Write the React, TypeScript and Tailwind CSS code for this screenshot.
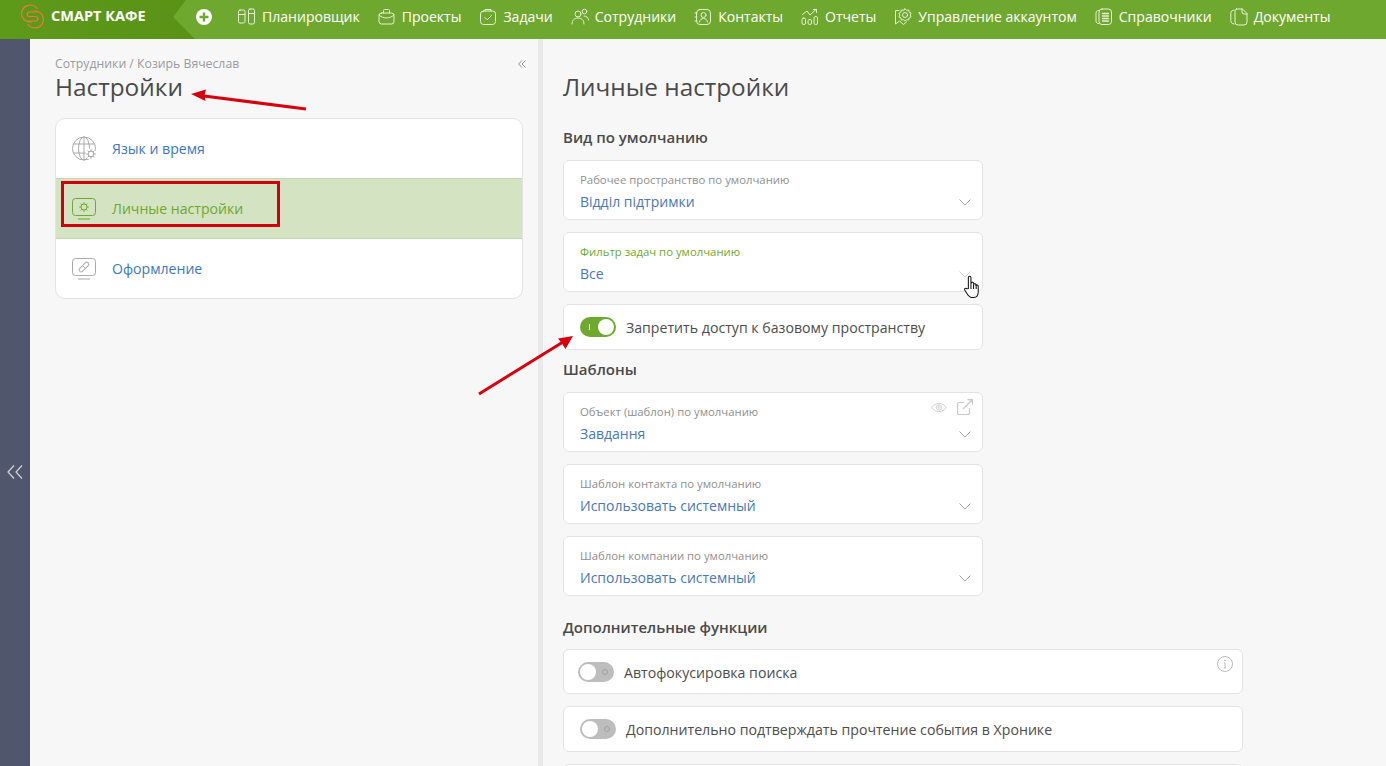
import React from "react";

const I = ({ children, cls = "w-[18px] h-[18px]", vb = "0 0 18 18" }: { children: React.ReactNode; cls?: string; vb?: string }) => (
  <svg viewBox={vb} className={cls} fill="none" stroke="currentColor" strokeWidth="1" strokeLinecap="round" strokeLinejoin="round">
    {children}
  </svg>
);

const navItems: { label: string; icon: React.ReactNode }[] = [
  { label: "Планировщик", icon: <I><rect x="0.500" y="2" width="6.500" height="13" rx="1.500" /><rect x="10.500" y="1" width="6" height="15" rx="1.500" /><path d="M.5 6.500H7M10.500 5.500h6" /></I> },
  { label: "Проекты", icon: <I><rect x="1" y="5" width="15" height="11" rx="2.500" /><path d="M1 7c4 4 11 4 15 0" /><path d="M5.500 5V2.500a1 1 0 0 1 1-1h4a1 1 0 0 1 1 1V5" /></I> },
  { label: "Задачи", icon: <I><rect x="1.500" y="3" width="15" height="13.500" rx="3" /><path d="M6 3V1.500h6V3M6 9.500l2.300 2.300L12.500 7.500" /></I> },
  { label: "Сотрудники", icon: <I><circle cx="7" cy="6" r="3" /><path d="M1 16c0-4 2.500-6 6-6s6 2 6 6" /><circle cx="13.500" cy="3.500" r="2.300" /><path d="M13 8c2.500 0 4.500 1.500 4.500 4" /></I> },
  { label: "Контакты", icon: <I><rect x="2.500" y="1.500" width="14" height="15" rx="3.500" /><circle cx="9.500" cy="7" r="2.500" /><path d="M5.500 14c.3-2.500 2-3.500 4-3.500s3.700 1 4 3.500M1 5h2M1 9h2M1 13h2" /></I> },
  { label: "Отчеты", icon: <I><rect x="1" y="10" width="3.500" height="6.500" rx="1.500" /><rect x="7" y="11.500" width="3.500" height="5" rx="1.500" /><rect x="13" y="8.500" width="3.500" height="8" rx="1.500" /><path d="M1.500 6.500L6 3l3 4 6-5.500M12.500 1.500h3v3" /></I> },
  { label: "Управление аккаунтом", icon: <I><path d="M5 2.500H1.500V16l4-3 4 3.500 3-2.500" /><path d="M11 .8l1.500 1.500 2.200-.3.400 2.100 2 1-1 1.900 1 1.900-2 1-.4 2.100-2.200-.3L11 13.200l-1.500-1.500-2.200.3-.4-2.100-2-1 1-1.900-1-1.900 2-1 .4-2.100 2.200.3z" /><circle cx="11" cy="7" r="2.500" /></I> },
  { label: "Справочники", icon: <I><path d="M3.500 2.500C2 2.500 1 3.500 1 5v8c0 1.500 1 2.500 2.500 2.500" /><rect x="4" y="1" width="12.500" height="15.500" rx="3" /><path d="M7.500 5.500h6M7.500 8h6M7.500 10.500h6M7.500 13h6" strokeWidth="1.300" /></I> },
  { label: "Документы", icon: <I><path d="M4 2C2 2 .8 3.500.8 5.500v7C.8 14.500 2 16 4 16" /><path d="M6.500 1h6l4.500 4.500V14a3 3 0 0 1-3 3H8a3 3 0 0 1-3-3V3a2 2 0 0 1 1.500-2z" /><path d="M12 1v3a2 2 0 0 0 2 2h3" /></I> },
];

const Chevron = ({ cls = "text-[#a9a9a9]" }: { cls?: string }) => (
  <svg viewBox="0 0 12 7" className={`w-3 h-[7px] ${cls}`} fill="none" stroke="currentColor" strokeWidth="1">
    <path d="M.5.5L6 6 11.500.5" />
  </svg>
);

const SelectCard = ({ label, value, active, actions }: { label: string; value: string; active?: boolean; actions?: boolean }) => (
  <div className="relative w-[420px] h-[60px] bg-white border border-[#e3e3e3] rounded-md pl-4 pr-[11px] pt-[12px]">
    <div className={`text-[11.350px] leading-[14px] ${active ? "text-[#6fa82e]" : "text-[#8f8f8f]"}`}>{label}</div>
    <div className="flex items-center justify-between mt-[3px] h-[24px]">
      <span className="text-[14px] pb-[2px] text-[#4a78b5]">{value}</span>
      <Chevron cls={active ? "text-[#cfcfcf]" : "text-[#a9a9a9]"} />
    </div>
    {actions && (
      <div className="absolute right-[9px] top-[6px] flex items-center gap-[10px] text-[#c9c9c9]">
        <svg viewBox="0 0 18 12" className="w-4 h-[11px]" fill="none" stroke="currentColor" strokeWidth="1">
          <path d="M1 6c3-6 13-6 16 0-3 6-13 6-16 0z" /><circle cx="9" cy="6" r="3" /><circle cx="9" cy="6" r="1" />
        </svg>
        <svg viewBox="0 0 16 16" className="w-4 h-4" fill="none" stroke="currentColor" strokeWidth="1.200">
          <path d="M12.500 9v5a1.500 1.500 0 0 1-1.500 1.500H2A1.500 1.500 0 0 1 .6 14V5A1.500 1.500 0 0 1 2 3.500h5M6 10L15.500.5M10.500.6h5v5" />
        </svg>
      </div>
    )}
  </div>
);

const Toggle = ({ on }: { on?: boolean }) =>
  on ? (
    <span className="relative shrink-0 flex items-center w-[36px] h-[20px] rounded-full bg-[#6fa82e]">
      <span className="ml-[9px] w-px h-[6px] bg-white" />
      <span className="absolute right-[2px] top-[2px] w-4 h-4 rounded-full bg-white" />
    </span>
  ) : (
    <span className="relative shrink-0 flex items-center w-[36px] h-[20px] rounded-full bg-[#bdbdbd]">
      <span className="absolute left-[2px] top-[2px] w-4 h-4 rounded-full bg-white" />
      <span className="absolute right-[6px] top-[7px] w-[6px] h-[6px] rounded-full border border-[#a3a3a3]" />
    </span>
  );

const MenuRow = ({ label, icon, active }: { label: string; icon: React.ReactNode; active?: boolean }) => (
  <div className={`flex items-center pl-[15px] ${active ? "h-[61px] bg-[#d4e3c2] border-y border-[#c5d6b1]" : "h-[59px]"}`}>
    <span className="w-[26px] h-[26px] flex items-center justify-center">{icon}</span>
    <span className={`ml-[15px] text-[14.100px] ${active ? "text-[#6fa82e]" : "text-[#3a78c2]"}`}>{label}</span>
  </div>
);

const Gear = ({ cx, cy, r = 2.5, len = 1.8 }: { cx: number; cy: number; r?: number; len?: number }) => (
  <g>
    <circle cx={cx} cy={cy} r={r} />
    <path
      d={[0, 45, 90, 135, 180, 225, 270, 315]
        .map((a) => {
          const c = Math.cos((a * Math.PI) / 180);
          const s = Math.sin((a * Math.PI) / 180);
          return `M${cx + r * c} ${cy + r * s}L${cx + (r + len) * c} ${cy + (r + len) * s}`;
        })
        .join("")}
    />
  </g>
);

export default function App() {
  return (
    <div className="relative w-[1386px] h-[766px] overflow-hidden bg-[#f7f7f7] font-['Open_Sans',sans-serif] text-[#4d4d4d]">
      {/* Top bar */}
      <header className="flex h-[39px] bg-[#6fa82e] text-white">
        <div className="flex items-center shrink-0 w-[195px] h-full pl-[20px] pb-[7px] bg-[linear-gradient(90deg,#5d9a1a,#5a9216)] [clip-path:polygon(0_0,186px_0,173px_17px,195px_39px,0_39px)]">
          <svg viewBox="0 0 25 25" className="w-[25px] h-[25px]" fill="none" stroke="#ec7a3c" strokeWidth="1.200" strokeLinecap="round">
            <path d="M17 4.500A8.500 8.500 0 1 0 9.500 18H12" />
            <path d="M8 20.500A8.500 8.500 0 1 0 15.500 7H13" />
            <path d="M18 8H9.500a2.250 2.250 0 0 0 0 4.500h6a2.250 2.250 0 0 1 0 4.500H7" />
          </svg>
          <span className="ml-[6px] text-[14.500px] font-bold whitespace-nowrap">СМАРТ КАФЕ</span>
        </div>
        <div className="flex items-center h-full pb-[6px]">
          <svg viewBox="0 0 16 16" className="w-4 h-4 ml-px shrink-0">
            <circle cx="8" cy="8" r="8" fill="#fff" />
            <path d="M8 3.500v9M3.500 8h9" stroke="#6fa82e" strokeWidth="2.400" />
          </svg>
          <nav className="flex items-center gap-[17.900px] ml-[26px]">
            {navItems.map((n) => (
              <div key={n.label} className="flex items-center gap-[6px] whitespace-nowrap text-[14.050px]">
                <span className="text-[#e6f0d8]">{n.icon}</span>
                <span>{n.label}</span>
              </div>
            ))}
          </nav>
        </div>
      </header>

      <div className="flex h-[727px]">
        {/* Collapsed rail */}
        <aside className="w-[30px] shrink-0 flex items-start justify-center bg-[#50566b] pt-[426px]">
          <svg viewBox="0 0 16 14" className="w-4 h-[14px] text-[#d5d7dd]" fill="none" stroke="currentColor" strokeWidth="1.200">
            <path d="M7 .5L1 7l6 6.500M15 .5L9 7l6 6.500" />
          </svg>
        </aside>

        {/* Left panel */}
        <section className="w-[508px] shrink-0 pl-[25px] pr-[12px] pt-[17px]">
          <div className="flex items-center justify-between h-[16px]">
            <span className="text-[12.250px] leading-[16px] text-[#9a9a9f]">Сотрудники / Козирь Вячеслав</span>
            <svg viewBox="0 0 8 8" className="w-2 h-2 text-[#8f8f8f]" fill="none" stroke="currentColor" strokeWidth="1">
              <path d="M4 .5L.6 4 4 7.500M7.500 .5L4 4l3.500 3.500" />
            </svg>
          </div>
          <h1 className="text-[24.400px] leading-[32px] font-normal text-[#4a4a4a] mt-[-1px]">Настройки</h1>
          <div className="mt-[15px] w-[468px] bg-white border border-[#e3e3e3] rounded-[10px] overflow-hidden">
            <MenuRow
              label="Язык и время"
              icon={
                <svg viewBox="0 0 26 26" className="w-[26px] h-[26px] text-[#a9a9a9]" fill="none" stroke="currentColor" strokeWidth="1">
                  <circle cx="13" cy="12.500" r="11.500" /><ellipse cx="13" cy="12.500" rx="5.500" ry="11.500" /><path d="M2.500 8h21M2.500 17h21M13 1v23" />
                  <circle cx="20" cy="18" r="5.500" fill="#fff" stroke="none" />
                  <Gear cx={20} cy={18} r={2.800} len={2} />
                </svg>
              }
            />
            <MenuRow
              active
              label="Личные настройки"
              icon={
                <svg viewBox="0 0 26 26" className="w-[26px] h-[26px] text-[#6fa82e]" fill="none" stroke="currentColor" strokeWidth="1">
                  <rect x="1.500" y="2.500" width="23" height="17" rx="3" /><path d="M7 23h12" strokeWidth="1.200" />
                  <Gear cx={13} cy={11} r={3} len={1.800} />
                </svg>
              }
            />
            <MenuRow
              label="Оформление"
              icon={
                <svg viewBox="0 0 26 26" className="w-[26px] h-[26px] text-[#a9a9a9]" fill="none" stroke="currentColor" strokeWidth="1">
                  <rect x="1.500" y="2.500" width="23" height="17" rx="3" /><path d="M7 23h12" strokeWidth="1.200" />
                  <rect x="7" y="9" width="12" height="4" rx="2" transform="rotate(-45 13 11)" /><path d="M12 10l2 2" />
                </svg>
              }
            />
          </div>
        </section>

        {/* Divider */}
        <div className="w-[5px] shrink-0 bg-[#e9e9e9]" />

        {/* Right panel */}
        <main className="flex-1 pl-[20px] pt-[30px]">
          <h2 className="text-[24.300px] leading-[36px] font-normal text-[#4a4a4a]">Личные настройки</h2>
          <h3 className="mt-[22px] text-[15px] leading-[20px] font-semibold text-[#4a4a4a]">Вид по умолчанию</h3>
          <div className="mt-[13px] flex flex-col gap-[12px]">
            <SelectCard label="Рабочее пространство по умолчанию" value="Відділ підтримки" />
            <SelectCard label="Фильтр задач по умолчанию" value="Все" active />
            <div className="flex items-center w-[420px] h-[46px] bg-white border border-[#e3e3e3] rounded-md pl-4 gap-[10px]">
              <Toggle on />
              <span className="text-[14.150px] pt-[2px]">Запретить доступ к базовому пространству</span>
            </div>
          </div>
          <h3 className="mt-[9px] text-[15px] leading-[20px] font-semibold text-[#4a4a4a]">Шаблоны</h3>
          <div className="mt-[13px] flex flex-col gap-[12px]">
            <SelectCard label="Объект (шаблон) по умолчанию" value="Завдання" actions />
            <SelectCard label="Шаблон контакта по умолчанию" value="Использовать системный" />
            <SelectCard label="Шаблон компании по умолчанию" value="Использовать системный" />
          </div>
          <h3 className="mt-[21px] text-[15px] leading-[20px] font-semibold text-[#4a4a4a]">Дополнительные функции</h3>
          <div className="mt-[12px] flex flex-col gap-[12px]">
            <div className="relative flex items-center w-[680px] h-[45px] bg-white border border-[#e3e3e3] rounded-md pl-[14px] gap-[10px]">
              <Toggle />
              <span className="text-[14.150px] pt-[2px]">Автофокусировка поиска</span>
              <svg viewBox="0 0 16 16" className="absolute right-[9px] top-[6px] w-4 h-4 text-[#bdbdbd]" fill="none" stroke="currentColor" strokeWidth="1">
                <circle cx="8" cy="8" r="7.500" /><path d="M8 7v5M6.800 12h2.400M6.800 7H8" /><circle cx="8" cy="4.500" r=".5" />
              </svg>
            </div>
            <div className="flex items-center w-[680px] h-[46px] bg-white border border-[#e3e3e3] rounded-md pl-4 gap-[10px]">
              <Toggle />
              <span className="text-[14.150px] pt-[2px]">Дополнительно подтверждать прочтение события в Хронике</span>
            </div>
            <div className="w-[680px] h-[46px] bg-white border border-[#e3e3e3] rounded-md" />
          </div>
        </main>
      </div>

      {/* Annotations over the page */}
      <div className="absolute left-[61px] top-[181px] w-[219px] h-[46px] border-[3px] border-[#d0000f]" />
      <svg viewBox="0 0 1386 766" className="absolute left-0 top-0 w-[1386px] h-[766px] pointer-events-none" fill="#d6000f" stroke="none">
        <path d="M306 109L204 96" stroke="#d6000f" strokeWidth="3" />
        <path d="M191 94l15-4.500-1.500 6 1 5.500z" />
        <path d="M479 394L563 342" stroke="#d6000f" strokeWidth="3" />
        <path d="M573 336l-7.500 13-3.500-5.500-4-5z" />
      </svg>
      {/* Pointer */}
      <svg viewBox="0 0 16 24" className="absolute left-[963px] top-[275px] w-[18px] h-[25px]" fill="#fff" stroke="#111" strokeWidth="1">
        <path d="M4.500 13V2.500c0-1.800 2.500-1.800 2.500 0V9l.1-1c.2-1.300 2.300-1.300 2.400 0v1.200c.2-1.200 2.200-1.200 2.300 0v1c.3-1 2.200-1 2.200.5v5.300c0 3-1.500 5.500-4.500 5.500H8c-2.500 0-3.500-1.500-5-4L1 14.500c-.7-1.300 1-2.500 2-1.300z" />
        <path d="M7 9v4.500M9.500 9v4.500M12 9.500v4" />
      </svg>
    </div>
  );
}
